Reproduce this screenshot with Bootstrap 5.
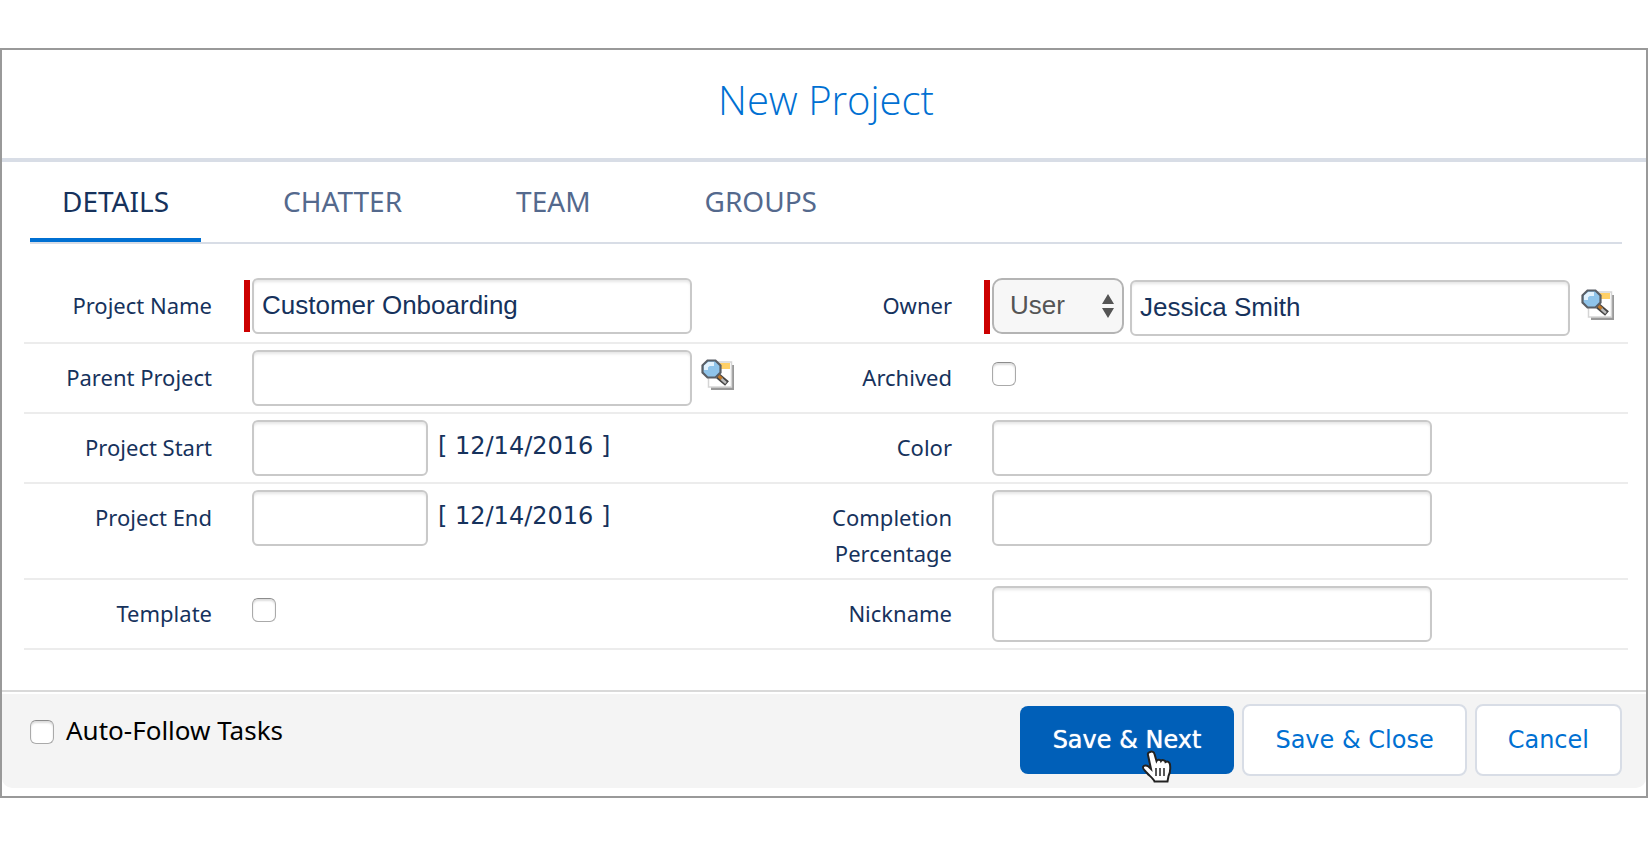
<!DOCTYPE html>
<html lang="en">
<head>
<meta charset="utf-8">
<meta name="viewport" content="width=device-width, initial-scale=1">
<title>New Project</title>
<link href="https://cdn.jsdelivr.net/npm/bootstrap@5.3.0/dist/css/bootstrap.min.css" rel="stylesheet">
<style>
body { font-family: "Noto Sans", "Open Sans", sans-serif; color: #16325c; background: #fff; }
.dialog { margin-top: 48px; border: 2px solid #999; padding-bottom: 8px; }
.dialog-head { border-bottom: 4px solid #d8dde6; height: 112px; padding: 0 0 8px 4px; }
.dialog-title { font-family: "Open Sans", "Noto Sans", sans-serif; font-size: 40px; font-weight: 300; line-height: 48px; color: #0070d2; }
.tabs { margin: 0 24px 0 28px; border-bottom: 2px solid #d8dde6; gap: 50px; }
.tabs .nav-link { height: 80px; padding: 19px 32px 0; font-size: 28px; line-height: 40px; color: #54698d; border-bottom: 4px solid transparent; border-radius: 0; }
.tabs .nav-link.active { color: #16325c; border-bottom-color: #0070d2; }
.fields { padding: 28px 18px 40px 22px; }
.field-row { display: grid; grid-template-columns: 740fr 864fr; padding: 6px 0; border-bottom: 2px solid #ececec; }
.field-label { flex: 0 0 228px; padding: 9px 40px 1px 0; font-size: 22px; line-height: 36px; text-align: right; }
.box { height: 56px; width: 440px; min-width: 0; padding: 0 8px 2px; border: 2px solid #c9c9c9; border-radius: 6px; box-shadow: inset 0 3px 3px -1px #e6e6e6; font-family: "Liberation Sans", Arial, sans-serif; font-size: 26px; color: #16325c; background: #fff; }
.box-date { width: 176px; }
.needed { position: relative; }
.needed::before { content: ""; position: absolute; left: -8px; top: 2px; bottom: 2px; width: 6px; background: #c00; }
.owner-kind { margin-right: 6px; }
.owner-kind::before { bottom: 0; }
.owner-type { display: block; appearance: none; width: 132px; height: 56px; padding: 0 0 2px 16px; border: 2px solid #b4b4b4; border-radius: 10px; background: #f7f7f7; font-family: "Liberation Sans", Arial, sans-serif; font-size: 26px; color: #555; }
.owner-name { padding-top: 2px; gap: 2px; }
.arrows { position: absolute; right: 10px; top: 16px; pointer-events: none; }
.date-link { margin-left: 10px; padding-top: 8px; font-family: "DejaVu Sans", Verdana, sans-serif; font-size: 24px; line-height: 36px; color: #16325c; text-decoration: none; white-space: nowrap; }
.tick { appearance: none; flex: none; width: 24px; height: 24px; margin: 0; border: 1px solid #aaa; border-top-color: #8c8c8c; border-radius: 6px; background: #fff; box-shadow: inset 0 2px 2px #ddd; }
.field-row .tick { margin-top: 12px; }
.lookup { padding: 0; border: 0; background: none; line-height: 0; margin: 8px 0 0 9px; }
.dialog-foot { border-top: 2px solid #d9d9d9; padding-top: 2px; }
.foot-bar { background: #f4f4f4; border-radius: 0 0 10px 10px; padding: 10px 24px 12px 28px; }
.follow { font-size: 26px; line-height: 34px; color: #000; padding-top: 9px; }
.follow .tick { margin-top: 4px; }
.act { padding: 0 31px; height: 72px; border: 2px solid #d8dde6; border-radius: 8px; background: #fff; color: #0070d2; font-family: "DejaVu Sans", Verdana, sans-serif; font-size: 24px; line-height: 36px; }
.act-main { height: 68px; padding: 0 33px; border: 0; background: #005fb8; color: #fff; text-shadow: 0 0 1px #fff; position: relative; }
.pointer { position: absolute; right: 61px; bottom: -12px; }
</style>
</head>
<body>
<svg class="d-none">
  <symbol id="lookup-icon" viewBox="0 0 34 34">
    <path d="M10 7h23v25H10z" fill="#999"/>
    <path d="M7.500 4h23v25h-23z" fill="#fff" stroke="#d5d5d5" stroke-width="1.500"/>
    <path d="M17 5h12v6H17z" fill="#ffd066"/>
    <path d="M17 18l9 7.500" stroke="#444" stroke-width="6"/>
    <path d="M17 17.500l4 3.500" stroke="#c07828" stroke-width="3"/>
    <path d="M20.500 21l4.500 4" stroke="#bbb" stroke-width="2.500"/>
    <path d="M6.500 2.500h8l5 5v7l-5 5h-8l-5-5v-7z" fill="#8fc4ea" stroke="#5a5f66" stroke-width="2.200"/>
    <path d="M5 12V8.500L8 6h5" stroke="#e2f2fd" stroke-width="4" fill="none"/>
  </symbol>
</svg>
<main class="dialog">
  <header class="dialog-head d-flex align-items-center justify-content-center">
    <h1 class="dialog-title m-0">New Project</h1>
  </header>
  <nav class="nav tabs">
    <a class="nav-link active" aria-current="page" href="#details">DETAILS</a>
    <a class="nav-link" href="#chatter">CHATTER</a>
    <a class="nav-link" href="#team">TEAM</a>
    <a class="nav-link" href="#groups">GROUPS</a>
  </nav>
  <form>
    <div class="fields" id="details">
      <div class="field-row">
        <div class="d-flex align-items-start">
          <label class="field-label" for="name">Project Name</label>
          <div class="needed d-flex"><input class="box" id="name" type="text" value="Customer Onboarding"></div>
        </div>
        <div class="d-flex align-items-start">
          <label class="field-label" for="owner">Owner</label>
          <div class="needed owner-kind">
            <select class="owner-type" aria-label="Owner type"><option>User</option></select>
            <svg class="arrows" width="12" height="24" viewBox="0 0 12 24"><path d="M6 0l6 10H0zM6 24l6-10H0z" fill="#555"/></svg>
          </div>
          <div class="d-flex align-items-start owner-name">
            <input class="box" id="owner" type="text" value="Jessica Smith">
            <button class="lookup" type="button" aria-label="Look up owner"><svg width="34" height="34"><use href="#lookup-icon"/></svg></button>
          </div>
        </div>
      </div>
      <div class="field-row">
        <div class="d-flex align-items-start">
          <label class="field-label" for="parent">Parent Project</label>
          <input class="box" id="parent" type="text">
          <button class="lookup" type="button" aria-label="Look up parent project"><svg width="34" height="34"><use href="#lookup-icon"/></svg></button>
        </div>
        <div class="d-flex align-items-start">
          <label class="field-label" for="archived">Archived</label>
          <input class="tick" id="archived" type="checkbox">
        </div>
      </div>
      <div class="field-row">
        <div class="d-flex align-items-start">
          <label class="field-label" for="start">Project Start</label>
          <input class="box box-date" id="start" type="text">
          <a class="date-link" href="#start">[ 12/14/2016 ]</a>
        </div>
        <div class="d-flex align-items-start">
          <label class="field-label" for="color">Color</label>
          <input class="box" id="color" type="text">
        </div>
      </div>
      <div class="field-row">
        <div class="d-flex align-items-start">
          <label class="field-label" for="end">Project End</label>
          <input class="box box-date" id="end" type="text">
          <a class="date-link" href="#end">[ 12/14/2016 ]</a>
        </div>
        <div class="d-flex align-items-start">
          <label class="field-label" for="completion">Completion Percentage</label>
          <input class="box" id="completion" type="text">
        </div>
      </div>
      <div class="field-row">
        <div class="d-flex align-items-start">
          <label class="field-label" for="template">Template</label>
          <input class="tick" id="template" type="checkbox">
        </div>
        <div class="d-flex align-items-start">
          <label class="field-label" for="nickname">Nickname</label>
          <input class="box" id="nickname" type="text">
        </div>
      </div>
    </div>
    <footer class="dialog-foot">
      <div class="foot-bar d-flex justify-content-between align-items-start">
        <label class="follow d-flex align-items-center"><input class="tick me-2" type="checkbox"><span class="ps-1">Auto-Follow Tasks</span></label>
        <div class="d-flex align-items-center gap-2">
          <button class="act act-main" type="submit">Save &amp; Next
            <svg class="pointer" width="32" height="36" viewBox="0 0 32 36"><path d="M9 2c2-1 4 0 4.500 2l2 7c1-2 4-1.500 4.500 0 1-1.500 4-1 4.500 1 2-1 4 0 4.500 2.500 .5 4 .5 8-1.500 11.500l-1 5.500H13.500c-1-3-5-5.500-7.500-8.500-2-2.500-4.500-4-4-6 .5-2 3.500-2 5.500-.5l2.500 2.500L7 5C6.500 3.500 7.500 2.500 9 2z" fill="#fff" stroke="#222" stroke-width="2"/><path d="M15 18v8M19 18v8M23 18v8" stroke="#222" stroke-width="1.500"/></svg>
          </button>
          <button class="act" type="button">Save &amp; Close</button>
          <button class="act" type="button">Cancel</button>
        </div>
      </div>
    </footer>
  </form>
</main>
<script src="https://cdn.jsdelivr.net/npm/bootstrap@5.3.0/dist/js/bootstrap.bundle.min.js"></script>
</body>
</html>
